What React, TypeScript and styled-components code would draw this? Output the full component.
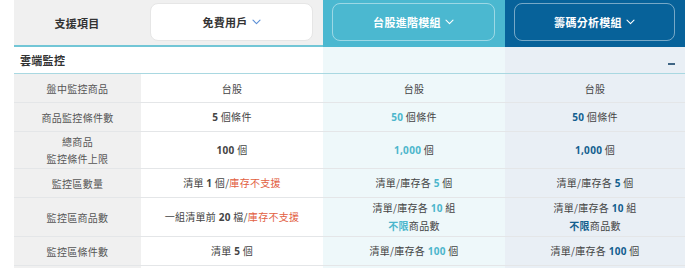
import React from "react";
import styled, { createGlobalStyle, css } from "styled-components";

type Tone = "free" | "pro" | "chip";

const GlobalStyle = createGlobalStyle`
  html, body {
    margin: 0;
    padding: 0;
    background: #ffffff;
  }
  body {
    font-family: "Noto Sans CJK TC", "Noto Sans", sans-serif;
    -webkit-font-smoothing: antialiased;
  }
`;

const Chevron = ({ color }: { color: string }) => (
  <svg width="9" height="6" viewBox="0 0 9 6" fill="none">
    <path d="M1 1.2L4.5 4.6L8 1.2" stroke={color} strokeWidth="1.1" strokeLinecap="round" strokeLinejoin="round" />
  </svg>
);

const accent: Record<Tone, string> = {
  free: "#444444",
  pro: "#4cb6cc",
  chip: "#13608f",
};

const rows: { label: React.ReactNode; cells: (tone: Tone) => React.ReactNode }[] = [
  {
    label: "盤中監控商品",
    cells: () => "台股",
  },
  {
    label: "商品監控條件數",
    cells: (t) => (
      <>
        <Num tone={t}>{t === "free" ? "5" : "50"}</Num> 個條件
      </>
    ),
  },
  {
    label: (
      <>
        總商品
        <br />
        監控條件上限
      </>
    ),
    cells: (t) => (
      <>
        <Num tone={t}>{t === "free" ? "100" : "1,000"}</Num> 個
      </>
    ),
  },
  {
    label: "監控區數量",
    cells: (t) =>
      t === "free" ? (
        <>
          清單 <Num tone={t}>1</Num> 個/<Warn>庫存不支援</Warn>
        </>
      ) : (
        <>
          清單/庫存各 <Num tone={t}>5</Num> 個
        </>
      ),
  },
  {
    label: "監控區商品數",
    cells: (t) =>
      t === "free" ? (
        <>
          一組清單前 <Num tone={t}>20</Num> 檔/<Warn>庫存不支援</Warn>
        </>
      ) : (
        <>
          清單/庫存各 <Num tone={t}>10</Num> 組
          <br />
          <Num tone={t}>不限</Num>商品數
        </>
      ),
  },
  {
    label: "監控區條件數",
    cells: (t) =>
      t === "free" ? (
        <>
          清單 <Num tone={t}>5</Num> 個
        </>
      ) : (
        <>
          清單/庫存各 <Num tone={t}>100</Num> 個
        </>
      ),
  },
];

const plans: { tone: Tone; name: string }[] = [
  { tone: "free", name: "免費用戶" },
  { tone: "pro", name: "台股進階模組" },
  { tone: "chip", name: "籌碼分析模組" },
];

const App = () => {
  return (
    <>
      <GlobalStyle />
      <Page>
        <Table>
          <HeadCell tone="label">
            <HeadLabel>支援項目</HeadLabel>
          </HeadCell>
          {plans.map((p) => (
            <HeadCell key={p.tone} tone={p.tone}>
              <PlanButton tone={p.tone}>
                {p.name}
                <Chevron color={p.tone === "free" ? "#5b8fd6" : "#ffffff"} />
              </PlanButton>
            </HeadCell>
          ))}

          <SectionCell tone="label">
            <SectionTitle>雲端監控</SectionTitle>
          </SectionCell>
          <SectionCell tone="free" />
          <SectionCell tone="pro" />
          <SectionCell tone="chip">
            <Collapse />
          </SectionCell>

          {rows.map((r, i) => (
            <React.Fragment key={i}>
              <LabelCell>
                <CellText>{r.label}</CellText>
              </LabelCell>
              {plans.map((p) => (
                <ValueCell key={p.tone} tone={p.tone}>
                  <CellText>{r.cells(p.tone)}</CellText>
                </ValueCell>
              ))}
            </React.Fragment>
          ))}

          {/* next row continues below the fold */}
          <LabelCell />
          {plans.map((p) => (
            <ValueCell key={p.tone} tone={p.tone} />
          ))}
        </Table>
      </Page>
    </>
  );
};

// --- Styled Components ---

const bodyBg = {
  label: "#f0f0f0",
  free: "#ffffff",
  pro: "#eef8fa",
  chip: "#e9eff5",
};

const headBg = {
  label: "#f0f0f0",
  free: "#f0f0f0",
  pro: "#4bb8d0",
  chip: "#07629a",
};

const Page = styled.div`
  padding: 0 5px 0 14px;
`;

const Table = styled.div`
  display: grid;
  grid-template-columns: 127px 182px 182px 180px;
  width: 671px;
`;

const HeadCell = styled.div<{ tone: keyof typeof headBg }>`
  background: ${(p) => headBg[p.tone]};
  height: 47px;
  box-sizing: border-box;
  padding: 3px 10px 4px 9px;
  display: flex;
  align-items: stretch;
  justify-content: center;
  border-bottom: 2px solid
    ${(p) => (p.tone === "label" || p.tone === "free" ? "#72c6d6" : headBg[p.tone])};
`;

const HeadLabel = styled.div`
  display: flex;
  align-items: center;
  font-size: 11px;
  font-weight: 700;
  color: #333333;
  letter-spacing: 0.3px;
  padding-top: 2px;
`;

const PlanButton = styled.div<{ tone: Tone }>`
  flex: 1;
  display: flex;
  align-items: center;
  justify-content: center;
  gap: 4px;
  border-radius: 8px;
  font-size: 11px;
  font-weight: 700;
  letter-spacing: 0.3px;
  ${(p) =>
    p.tone === "free"
      ? css`
          background: #ffffff;
          border: 1px solid #e6e6e6;
          color: #333333;
        `
      : css`
          border: 1px solid rgba(255, 255, 255, 0.45);
          color: #ffffff;
        `}
`;

const SectionCell = styled.div<{ tone: keyof typeof bodyBg }>`
  height: 27px;
  box-sizing: border-box;
  background: ${(p) => (p.tone === "label" ? "#ffffff" : bodyBg[p.tone])};
  border-bottom: 1px solid #a9d8e1;
  display: flex;
  align-items: center;
  justify-content: ${(p) => (p.tone === "chip" ? "flex-end" : "flex-start")};
`;

const SectionTitle = styled.div`
  font-size: 11px;
  font-weight: 700;
  color: #333333;
  padding-left: 6px;
  letter-spacing: 0.3px;
`;

const Collapse = styled.span`
  width: 7px;
  height: 2px;
  background: #3f6584;
  margin: 7px 10px 0 0;
`;

const cellBase = css`
  min-height: 29px;
  box-sizing: border-box;
  padding: 1px 4px;
  border-bottom: 1px solid #e4e6e8;
  display: flex;
  align-items: center;
  justify-content: center;
  text-align: center;
  font-size: 10px;
  line-height: 17px;
  letter-spacing: 0.3px;
`;

const LabelCell = styled.div`
  ${cellBase}
  background: #f0f0f0;
  color: #555555;
`;

const ValueCell = styled.div<{ tone: Tone }>`
  ${cellBase}
  background: ${(p) => bodyBg[p.tone]};
  color: #444444;
`;

const CellText = styled.span`
  display: block;
`;

const Num = styled.b<{ tone: Tone }>`
  font-weight: 700;
  color: ${(p) => accent[p.tone]};
  font-family: "Noto Sans", "Noto Sans CJK TC", sans-serif;
`;

const Warn = styled.span`
  color: #e2603f;
`;

export default App;
